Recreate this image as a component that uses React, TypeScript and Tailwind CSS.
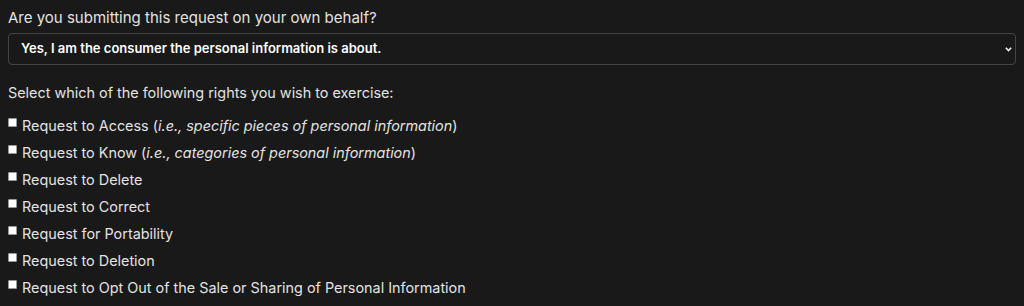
import React from 'react';

const rights: { label: string; note?: string }[] = [
  { label: 'Request to Access', note: 'specific pieces of personal information' },
  { label: 'Request to Know', note: 'categories of personal information' },
  { label: 'Request to Delete' },
  { label: 'Request to Correct' },
  { label: 'Request for Portability' },
  { label: 'Request to Deletion' },
  { label: 'Request to Opt Out of the Sale or Sharing of Personal Information' },
];

export default function App() {
  return (
    <div
      className="w-[1024px] h-[306px] overflow-hidden bg-[#191919] text-[#e2e2e2] px-2 pt-[8px]"
      style={{ fontFamily: 'Inter, "Noto Sans", sans-serif' }}
    >
      <label className="block text-[15px] leading-5">Are you submitting this request on your own behalf?</label>

      <div className="relative mt-[5px]">
        <select
          className="appearance-none w-full h-[32px] bg-[#191919] border border-[#444] rounded-[4px] pl-3 pr-8 text-[13px] font-semibold text-white outline-none"
          defaultValue="self"
          style={{ fontFamily: 'Inter, "Noto Sans", sans-serif' }}
        >
          <option value="self">Yes, I am the consumer the personal information is about.</option>
          <option value="agent">No, I am an authorized agent.</option>
        </select>
        <svg
          className="absolute right-[4px] top-[14px] pointer-events-none"
          width="7"
          height="5"
          viewBox="0 0 7 5"
          fill="none"
        >
          <path d="M0.8 0.8 L3.5 3.6 L6.2 0.8" stroke="#ededed" strokeWidth="1.6" />
        </svg>
      </div>

      <p className="text-[14.4px] leading-5 mt-[18px]">Select which of the following rights you wish to exercise:</p>

      <div className="mt-[13px] flex flex-col">
        {rights.map((r) => (
          <label key={r.label} className="flex items-start h-[27px]">
            <span className="mt-[2px] w-[9px] h-[9px] bg-white border border-[#999] rounded-[1px] shrink-0" />
            <span className="ml-[5px] text-[14.4px] leading-5">
              {r.label}
              {r.note && (
                <>
                  {' ('}
                  <i>i.e., {r.note}</i>
                  {')'}
                </>
              )}
            </span>
          </label>
        ))}
      </div>
    </div>
  );
}
